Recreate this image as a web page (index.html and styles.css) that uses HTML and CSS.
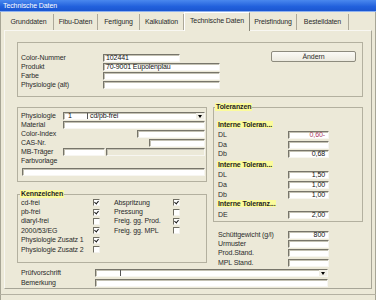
FILE: index.html
```html
<!DOCTYPE html>
<html>
<head>
    <meta charset="utf-8">
    <link rel="stylesheet" href="styles.css">
</head>
<body>
    <div class="window">
        <div class="titlebar">Technische Daten</div>

        <div class="tabs">
            <div class="tab w50">Grunddaten</div>
            <div class="tab w44">Fibu-Daten</div>
            <div class="tab w42">Fertigung</div>
            <div class="tab w44">Kalkulation</div>
            <div class="tab active w66">Technische Daten</div>
            <div class="tab w47">Preisfindung</div>
            <div class="tab w52">Bestelldaten</div>
        </div>

        <div class="panel">
            <!-- Kopfdaten -->
            <div class="group head-group">
                <div class="head-form">
                    <div class="row"><span class="lbl head-lbl">Color-Nummer</span><span class="field f-color">102441</span></div>
                    <div class="row"><span class="lbl head-lbl">Produkt</span><span class="field f-prod">70-9001 Eupolenplau</span></div>
                    <div class="row"><span class="lbl head-lbl">Farbe</span><span class="field f-prod"></span></div>
                    <div class="row"><span class="lbl head-lbl">Physiologie (alt)</span><span class="field f-prod"></span></div>
                </div>
                <div class="btn">Ändern</div>
            </div>

            <div class="middle">
                <div class="left-col">
                    <div class="group phys-group">
                        <div class="row">
                            <span class="lbl phys-lbl">Physiologie</span>
                            <span class="field combo grow">
                                <span class="combo-code phys-code">1</span>
                                <span class="combo-text">cd/pb-frei</span>
                                <span class="drop"></span>
                            </span>
                        </div>
                        <div class="row"><span class="lbl phys-lbl">Material</span><span class="field grow"></span></div>
                        <div class="row"><span class="lbl phys-lbl">Color-Index</span><span class="field f-index"></span></div>
                        <div class="row"><span class="lbl phys-lbl">CAS-Nr.</span><span class="field f-cas"></span></div>
                        <div class="row">
                            <span class="lbl phys-lbl">MB-Träger</span>
                            <span class="field f-mb"></span>
                            <span class="field disabled grow"></span>
                        </div>
                        <div class="row"><span class="lbl">Farbvorlage</span></div>
                        <div class="field f-vorlage"></div>
                    </div>

                    <fieldset class="group kenn-group">
                        <legend class="mark">Kennzeichen</legend>
                        <div class="kenn-grid">
                            <span class="lbl">cd-frei</span><span class="cb on"></span>
                            <span class="lbl">Abspritzung</span><span class="cb on"></span>

                            <span class="lbl">pb-frei</span><span class="cb on"></span>
                            <span class="lbl">Pressung</span><span class="cb"></span>

                            <span class="lbl">diaryl-frei</span><span class="cb"></span>
                            <span class="lbl">Freig. gg. Prod.</span><span class="cb on"></span>

                            <span class="lbl">2000/53/EG</span><span class="cb on"></span>
                            <span class="lbl">Freig. gg. MPL</span><span class="cb"></span>

                            <span class="lbl">Physiologie Zusatz 1</span><span class="cb on"></span>
                            <span></span><span></span>

                            <span class="lbl">Physiologie Zusatz 2</span><span class="cb"></span>
                            <span></span><span></span>
                        </div>
                    </fieldset>
                </div>

                <div class="right-col">
                    <fieldset class="group tol-group">
                        <legend class="mark">Toleranzen</legend>

                        <div class="thead"><span class="mark">Interne Toleran...</span></div>
                        <div class="trow"><span class="lbl tol-lbl">DL</span><span class="field num f-tol red">0,60-</span></div>
                        <div class="trow"><span class="lbl tol-lbl">Da</span><span class="field num f-tol"></span></div>
                        <div class="trow"><span class="lbl tol-lbl">Db</span><span class="field num f-tol">0,68</span></div>

                        <div class="thead gap"><span class="mark">Interne Toleran...</span></div>
                        <div class="trow"><span class="lbl tol-lbl">DL</span><span class="field num f-tol">1,50</span></div>
                        <div class="trow"><span class="lbl tol-lbl">Da</span><span class="field num f-tol">1,00</span></div>
                        <div class="trow"><span class="lbl tol-lbl">Db</span><span class="field num f-tol">1,00</span></div>

                        <div class="thead"><span class="mark">Interne Toleranz...</span></div>
                        <div class="trow gap"><span class="lbl tol-lbl">DE</span><span class="field num f-tol">2,00</span></div>
                    </fieldset>

                    <div class="extra">
                        <div class="erow"><span class="lbl tol-lbl">Schüttgewicht (g/l)</span><span class="field num f-tol">800</span></div>
                        <div class="erow"><span class="lbl tol-lbl">Urmuster</span><span class="field f-tol"></span></div>
                        <div class="erow"><span class="lbl tol-lbl">Prod.Stand.</span><span class="field f-tol"></span></div>
                        <div class="erow"><span class="lbl tol-lbl">MPL Stand.</span><span class="field f-tol"></span></div>
                    </div>
                </div>
            </div>

            <div class="bottom-rows">
                <div class="brow">
                    <span class="lbl bottom-lbl">Prüfvorschrift</span>
                    <span class="field combo f-bottom">
                        <span class="combo-code pruef-code"></span>
                        <span class="combo-text"></span>
                        <span class="drop"></span>
                    </span>
                </div>
                <div class="brow">
                    <span class="lbl bottom-lbl">Bemerkung</span>
                    <span class="field f-bottom"></span>
                </div>
            </div>
        </div>
        <div class="footer"></div>
    </div>
</body>
</html>
```

FILE: styles.css
```css
* {
    box-sizing: border-box;
}

body {
    margin: 0;
    font-family: 'Liberation Sans', Arial, sans-serif;
    font-size: 7px;
    letter-spacing: -0.1px;
    color: #2b2b2b;
    background: #ece9d8;
}

.window {
    width: 376px;
    height: 300px;
    background: #ece9d8;
    box-shadow: inset 1px 0 0 #a7a595, inset -1px 0 0 #a7a595;
    overflow: hidden;
}

.titlebar {
    height: 12px;
    line-height: 12px;
    padding-left: 3px;
    color: #fff;
    background: linear-gradient(to bottom, #4a88ee, #2160dc 60%, #1b56d0);
    border-bottom: 1px solid #8fb2ef;
}

/* Reiter */
.tabs {
    display: flex;
    align-items: flex-end;
    height: 19px;
    padding-left: 4px;
    margin-bottom: -1px;
}

.tab {
    height: 16px;
    line-height: 16px;
    margin-bottom: 1px;
    text-align: center;
    border-right: 1px solid #aca899;
    white-space: nowrap;
}

.tab.active {
    position: relative;
    z-index: 1;
    height: 19px;
    margin-bottom: 0;
    line-height: 16px;
    background: #ece9d8;
    border-left: 1px solid #fff;
    border-top: 1px solid #fff;
    border-right: 1px solid #8a887a;
}

.w42 { width: 42px; }
.w44 { width: 44px; }
.w47 { width: 47px; }
.w50 { width: 50px; }
.w52 { width: 52px; }
.w66 { width: 66px; }

.panel {
    margin-left: 4px;
    width: 368px;
    height: 259px;
    border: 1px solid #a7a597;
    border-top-color: #f8f7f2;
    border-left-color: #f8f7f2;
}

.footer {
    height: 6px;
    border-bottom: 1px solid #b4b1a2;
}

/* Gruppen */
.group {
    border: 1px solid #b3b09f;
    margin: 0;
    min-width: 0;
}

fieldset.group {
    padding: 0;
}

legend {
    padding: 0 1px;
    line-height: 8px;
    height: 8px;
}

.mark {
    font-weight: bold;
    background: #fbfb9c;
    color: #1e1e1e;
}

.lbl {
    white-space: nowrap;
    line-height: 8px;
}

.row {
    display: flex;
    height: 9px;
}

.field {
    display: block;
    height: 8px;
    background: #fff;
    border: 1px solid;
    border-color: #77756a #f7f6f1 #f7f6f1 #77756a;
    box-shadow: inset 1px 1px 0 #c4c2b4;
    padding: 0 2px;
    line-height: 6px;
    color: #111;
    white-space: nowrap;
}

.field.disabled {
    background: #ece9d8;
}

.grow {
    flex: 1;
}

.num {
    text-align: right;
    padding-right: 3px;
}

.red {
    color: #a8385c;
}

.combo {
    display: flex;
    padding: 0;
}

.combo-code {
    height: 6px;
    border-right: 1px solid #555;
}

.combo-text {
    padding-left: 2px;
}

.drop {
    margin-left: auto;
    width: 8px;
    height: 6px;
    display: flex;
    align-items: center;
    justify-content: center;
    background: #f1efe6;
}

.drop::after {
    content: '';
    border-left: 2px solid transparent;
    border-right: 2px solid transparent;
    border-top: 3px solid #000;
}

/* Kopf */
.head-group {
    margin: 11px 0 0 12px;
    width: 346px;
    height: 55px;
    display: flex;
    align-items: flex-start;
    padding: 8px 6px 0 3px;
}

.head-form {
    margin-top: 3px;
}

.head-lbl {
    width: 82px;
}

.f-color { width: 77px; }
.f-prod { width: 117px; }

.btn {
    margin-left: auto;
    width: 85px;
    height: 11px;
    line-height: 9px;
    text-align: center;
    background: linear-gradient(to bottom, #fbfaf6, #eceadf);
    border: 1px solid #8d8b7e;
    border-radius: 2px;
}

/* Mitte */
.middle {
    display: flex;
    gap: 6px;
    height: 161px;
    margin: 10px 0 0 12px;
}

.left-col {
    width: 190px;
}

.right-col {
    width: 150px;
}

.phys-group {
    height: 75px;
    padding: 4px 1px 0 3px;
}

.phys-lbl {
    width: 42px;
}

.phys-code {
    width: 24px;
    padding-left: 4px;
}

.f-index { width: 68px; margin-left: auto; }
.f-cas { width: 56px; margin-left: auto; }
.f-mb { width: 42px; margin-right: 1px; }

.f-vorlage {
    margin: 2px 0 0 1px;
}

.kenn-group {
    margin-top: 8px;
    height: 73px;
}

.kenn-group legend {
    margin-left: -1px;
}

fieldset.kenn-group {
    padding-left: 3px;
}

.kenn-grid {
    display: grid;
    grid-template-columns: 72px 21px 59px 7px;
    grid-auto-rows: 9.4px;
    align-items: center;
}

.cb {
    width: 7px;
    height: 7px;
    background: #fff;
    border: 1px solid;
    border-color: #6f6d62 #f4f3ee #f4f3ee #6f6d62;
    position: relative;
}

.cb.on::after {
    content: '';
    position: absolute;
    left: 1px;
    top: 0;
    width: 2px;
    height: 3px;
    border-right: 1.3px solid #1b1b1b;
    border-bottom: 1.3px solid #1b1b1b;
    transform: rotate(40deg);
}

/* Toleranzen */
fieldset.tol-group {
    margin-top: -4px;
    height: 119px;
    padding: 10px 0 0 4px;
}

.tol-group legend {
    margin-left: -3px;
}

.thead {
    height: 8px;
    line-height: 8px;
    margin-bottom: 1px;
}

.thead .mark {
    margin-left: -1px;
    padding: 0 1px;
}

.thead.gap,
.trow.gap {
    margin-top: 2px;
}

.trow {
    display: flex;
    align-items: center;
    height: 9.8px;
}

.tol-lbl {
    width: 70px;
}

.f-tol {
    width: 41px;
}

.extra {
    margin-top: 8px;
    padding-left: 5px;
}

.erow {
    display: flex;
    align-items: center;
    height: 9.4px;
}

/* Unten */
.bottom-rows {
    margin: 1px 0 0 16px;
}

.brow {
    display: flex;
    height: 10px;
}

.bottom-lbl {
    width: 74px;
}

.f-bottom {
    width: 233px;
}

.pruef-code {
    width: 25px;
}
```
